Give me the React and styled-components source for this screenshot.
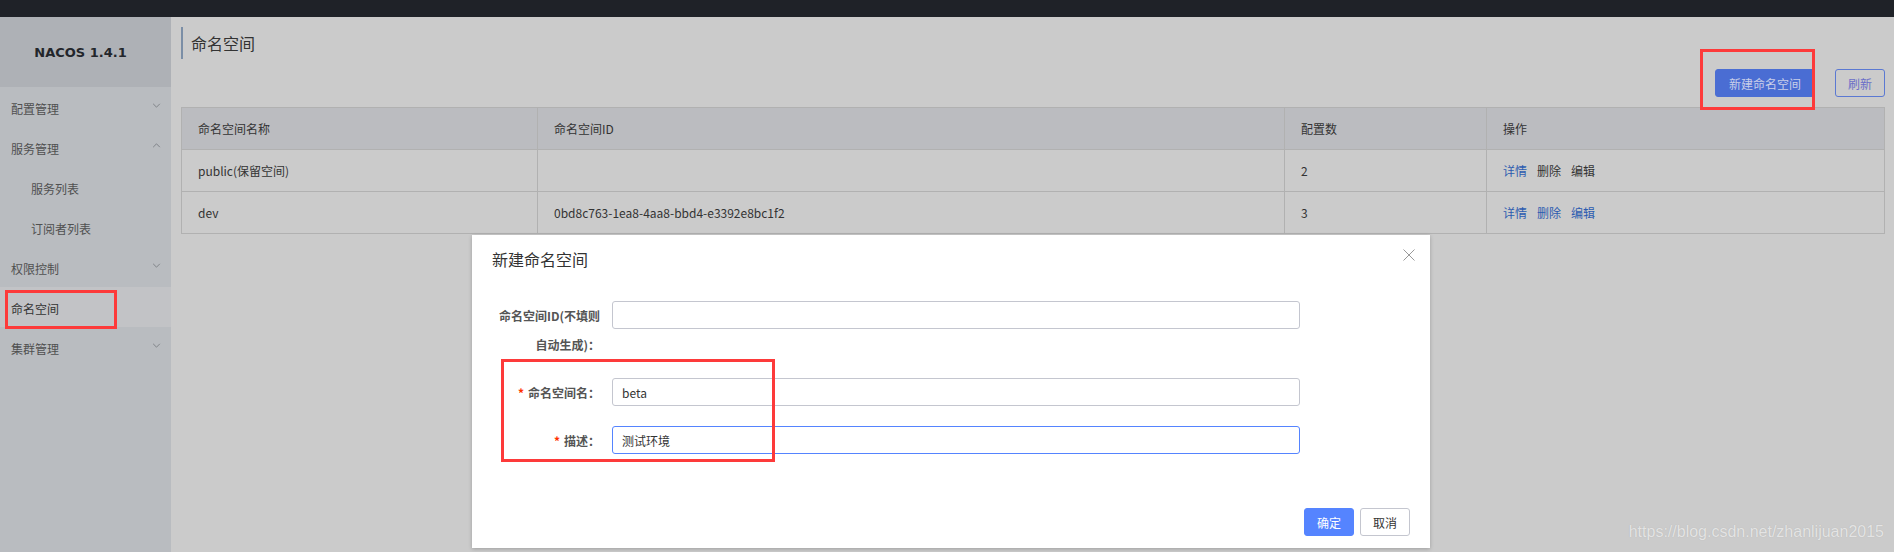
import React from "react";
import styled, { createGlobalStyle } from "styled-components";

const GlobalStyle = createGlobalStyle`
  body {
    margin: 0;
    font-family: "Liberation Sans", "Noto Sans CJK SC", sans-serif;
    font-size: 12px;
    color: #333;
  }
`;

const menu = [
  { label: "配置管理", chevron: "down" },
  { label: "服务管理", chevron: "up" },
  { label: "服务列表", sub: true },
  { label: "订阅者列表", sub: true },
  { label: "权限控制", chevron: "down" },
  { label: "命名空间", active: true },
  { label: "集群管理", chevron: "down" },
];

const rows = [
  { name: "public(保留空间)", id: "", count: 2, locked: true },
  { name: "dev", id: "0bd8c763-1ea8-4aa8-bbd4-e3392e8bc1f2", count: 3 },
];

const Chevron = ({ dir }) => (
  <ChevronSvg viewBox="0 0 10 6" $dir={dir}>
    <path d="M1 1 L5 5 L9 1" fill="none" stroke="#75787d" strokeWidth="1" />
  </ChevronSvg>
);

const App = () => {
  return (
    <>
      <GlobalStyle />
      <Page>
        <TopBar />
        <Body>
          <Sidebar>
            <Logo>NACOS 1.4.1</Logo>
            <Menu>
              {menu.map(item => (
                <MenuItem key={item.label} $sub={item.sub} $active={item.active}>
                  <span>{item.label}</span>
                  {item.chevron && <Chevron dir={item.chevron} />}
                </MenuItem>
              ))}
            </Menu>
          </Sidebar>
          <Main>
            <PageTitle>命名空间</PageTitle>
            <Toolbar>
              <Button $primary>新建命名空间</Button>
              <Button $ghost>刷新</Button>
            </Toolbar>
            <Table>
              <colgroup>
                <col style={{ width: 356 }} />
                <col style={{ width: 747 }} />
                <col style={{ width: 202 }} />
                <col style={{ width: 398 }} />
              </colgroup>
              <thead>
                <tr>
                  <Th>命名空间名称</Th>
                  <Th>命名空间ID</Th>
                  <Th>配置数</Th>
                  <Th>操作</Th>
                </tr>
              </thead>
              <tbody>
                {rows.map(r => (
                  <tr key={r.name}>
                    <Td>{r.name}</Td>
                    <Td>{r.id}</Td>
                    <Td>{r.count}</Td>
                    <Td>
                      <Actions>
                        <ActionLink>详情</ActionLink>
                        <ActionLink $muted={r.locked}>删除</ActionLink>
                        <ActionLink $muted={r.locked}>编辑</ActionLink>
                      </Actions>
                    </Td>
                  </tr>
                ))}
              </tbody>
            </Table>
          </Main>
        </Body>

        <Dialog>
          <DialogHeader>
            <DialogTitle>新建命名空间</DialogTitle>
            <CloseIcon viewBox="0 0 12 12">
              <path d="M0.5 0.5 L11.5 11.5 M11.5 0.5 L0.5 11.5" stroke="#999" strokeWidth="1" />
            </CloseIcon>
          </DialogHeader>
          <Form>
            <FormRow>
              <Label>命名空间ID(不填则自动生成)：</Label>
              <Input value="" readOnly />
            </FormRow>
            <FormRow>
              <Label>
                <Required>*</Required>命名空间名：
              </Label>
              <Input value="beta" readOnly />
            </FormRow>
            <FormRow>
              <Label>
                <Required>*</Required>描述：
              </Label>
              <Input value="测试环境" readOnly $focused />
            </FormRow>
          </Form>
          <DialogFooter>
            <DialogButton $primary>确定</DialogButton>
            <DialogButton>取消</DialogButton>
          </DialogFooter>
          <Mark $left={29} $top={124} $width={274} $height={103} />
        </Dialog>

        <Mark $left={5} $top={290} $width={112} $height={39} />
        <Mark $left={1700} $top={49} $width={115} $height={61} />
        <Watermark>https://blog.csdn.net/zhanlijuan2015</Watermark>
      </Page>
    </>
  );
};

const Page = styled.div`
  position: relative;
  display: grid;
  grid-template-rows: 17px 1fr;
  height: 552px;
  overflow: hidden;
  background: #cbcbcb;
`;

const TopBar = styled.div`
  background: #1f2228;
`;

const Body = styled.div`
  display: flex;
  min-height: 0;
`;

const Sidebar = styled.aside`
  width: 171px;
  flex-shrink: 0;
  background: #b9bcc0;
  display: flex;
  flex-direction: column;
`;

const Logo = styled.div`
  height: 70px;
  background: #aeb1b6;
  display: flex;
  align-items: center;
  justify-content: center;
  font-family: "DejaVu Sans", sans-serif;
  font-weight: bold;
  font-size: 13px;
  color: #23262b;
  padding: 0 10px 0 0;
  box-sizing: border-box;
`;

const Menu = styled.nav`
  display: flex;
  flex-direction: column;
`;

const MenuItem = styled.div`
  height: 40px;
  box-sizing: border-box;
  padding: 3px 10px 0 ${p => (p.$sub ? 31 : 11)}px;
  display: flex;
  align-items: center;
  justify-content: space-between;
  font-size: 12px;
  font-family: "Noto Sans CJK SC", sans-serif;
  color: ${p => (p.$active ? "#333" : "#505050")};
  background: ${p => (p.$active ? "#c2c3c6" : "transparent")};
`;

const ChevronSvg = styled.svg`
  width: 9px;
  height: 5px;
  margin-top: -6px;
  transform: ${p => (p.$dir === "up" ? "rotate(180deg)" : "none")};
`;

const Main = styled.main`
  flex: 1;
  padding: 10px 10px 0;
  display: flex;
  flex-direction: column;
`;

const PageTitle = styled.h1`
  margin: 0;
  height: 32px;
  border-left: 2px solid #7b8ea6;
  padding-left: 8px;
  display: flex;
  align-items: center;
  font-weight: normal;
  font-size: 16px;
  font-family: "Noto Sans CJK SC", sans-serif;
  color: #333;
`;

const Toolbar = styled.div`
  display: flex;
  justify-content: flex-end;
  gap: 20px;
  margin: 10px 0;
`;

const Button = styled.button`
  height: 28px;
  padding: 0 ${p => (p.$primary ? 13 : 12)}px;
  border-radius: 3px;
  font-size: 12px;
  font-family: "Noto Sans CJK SC", sans-serif;
  border: 1px solid ${p => (p.$primary ? "#4a6dd3" : "#5b79d2")};
  background: ${p => (p.$primary ? "#4a6dd3" : "transparent")};
  color: ${p => (p.$primary ? "#c9cfe9" : "#6a6ec8")};
`;

const Table = styled.table`
  width: 100%;
  table-layout: fixed;
  border-collapse: collapse;
  border: 1px solid #b1b1b1;
  font-family: "Noto Sans CJK SC", sans-serif;
  font-size: 12px;
`;

const Th = styled.th`
  height: 41px;
  padding: 0 16px;
  text-align: left;
  font-weight: normal;
  color: #333;
  background: #bbbcc0;
  border: 1px solid #b1b1b1;
`;

const Td = styled.td`
  height: 41px;
  padding: 0 16px;
  color: #333;
  border: 1px solid #b1b1b1;
`;

const Actions = styled.div`
  display: flex;
  gap: 10px;
`;

const ActionLink = styled.span`
  color: ${p => (p.$muted ? "#333" : "#2d5cb0")};
`;

const Dialog = styled.div`
  position: absolute;
  left: 472px;
  top: 235px;
  width: 958px;
  height: 313px;
  background: #fff;
  box-shadow: 0 1px 4px rgba(0, 0, 0, 0.22);
  display: flex;
  flex-direction: column;
  font-family: "Noto Sans CJK SC", sans-serif;
`;

const DialogHeader = styled.div`
  height: 48px;
  padding: 0 20px;
  display: flex;
  align-items: center;
  justify-content: space-between;
`;

const DialogTitle = styled.div`
  font-size: 16px;
  color: #333;
`;

const CloseIcon = styled.svg`
  width: 12px;
  height: 12px;
  margin-top: -9px;
  margin-right: -5px;
`;

const Form = styled.div`
  padding: 18px 20px 0;
  display: flex;
  flex-direction: column;
  gap: 19px;
`;

const FormRow = styled.div`
  display: flex;
  align-items: flex-start;
`;

const Label = styled.label`
  width: 120px;
  flex-shrink: 0;
  box-sizing: border-box;
  padding-right: 12px;
  text-align: right;
  line-height: 29px;
  font-size: 12px;
  font-weight: bold;
  color: #555;
`;

const Required = styled.span`
  color: #ff3000;
  margin-right: 4px;
`;

const Input = styled.input`
  width: 688px;
  height: 28px;
  box-sizing: border-box;
  padding: 0 9px;
  border: 1px solid ${p => (p.$focused ? "#5584ff" : "#c4c6cf")};
  border-radius: 3px;
  font-size: 12px;
  font-family: "Noto Sans CJK SC", sans-serif;
  color: #333;
  outline: none;
`;

const DialogFooter = styled.div`
  margin-top: auto;
  padding: 0 20px 12px;
  display: flex;
  justify-content: flex-end;
  gap: 6px;
`;

const DialogButton = styled.button`
  height: 28px;
  width: 50px;
  padding: 0;
  border-radius: 3px;
  font-size: 12px;
  font-family: "Noto Sans CJK SC", sans-serif;
  border: 1px solid ${p => (p.$primary ? "#5584ff" : "#c4c6cf")};
  background: ${p => (p.$primary ? "#5584ff" : "#fff")};
  color: ${p => (p.$primary ? "#fff" : "#333")};
`;

const Mark = styled.div`
  position: absolute;
  left: ${p => p.$left}px;
  top: ${p => p.$top}px;
  width: ${p => p.$width}px;
  height: ${p => p.$height}px;
  box-sizing: border-box;
  border: 3px solid #fd3a3a;
  pointer-events: none;
`;

const Watermark = styled.div`
  position: absolute;
  right: 10px;
  bottom: 11px;
  font-family: "Liberation Sans", sans-serif;
  font-size: 16px;
  color: #e4e4e4;
  text-shadow: 0 0 1px rgba(0, 0, 0, 0.15);
`;

export default App;
